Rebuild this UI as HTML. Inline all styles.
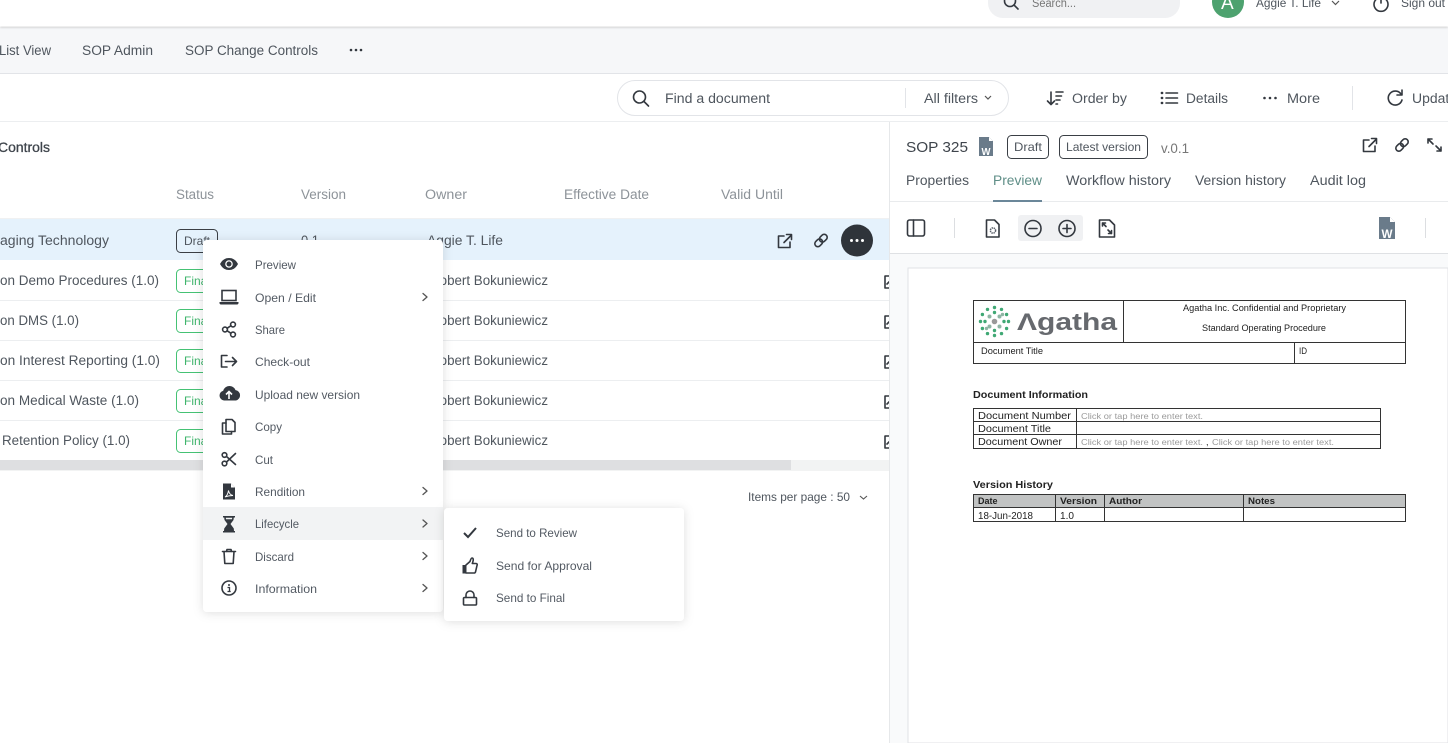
<!DOCTYPE html>
<html lang="en"><head><meta charset="utf-8"><title>SOP Change Controls</title>
<style>
html,body{margin:0;padding:0;background:#fff;width:1448px;height:743px;overflow:hidden}
svg{display:block}
text{font-family:"Liberation Sans",sans-serif;font-size:13.5px;fill:#4f565e}
.m{font-size:12px;fill:#535a63}
.h{fill:#8d9399}
.d{font-size:9px;fill:#222}
.g{font-size:8.5px;fill:#9a9a9a}
.s{fill:none;stroke:#33383f;stroke-width:1.6;stroke-linecap:round;stroke-linejoin:round}
.f{fill:#33383f}
</style></head><body>
<svg width="1448" height="743" viewBox="0 0 1448 743" xmlns="http://www.w3.org/2000/svg">
<defs>
<filter id="sh" x="-15%" y="-15%" width="130%" height="130%"><feDropShadow dx="0" dy="1" stdDeviation="5" flood-color="#000" flood-opacity=".13"/></filter>
<filter id="hd" x="-2%" y="-20%" width="104%" height="160%"><feDropShadow dx="0" dy="1" stdDeviation="1" flood-color="#000" flood-opacity=".18"/></filter>
</defs>
<rect width="1448" height="743" fill="#fff"/>

<!-- sub nav -->
<rect y="27" width="1448" height="46" fill="#f6f7f9"/>
<rect y="73" width="1448" height="1" fill="#e2e4e8"/>
<text x="-1" y="55" textLength="52" lengthAdjust="spacingAndGlyphs">List View</text>
<text x="82" y="55" textLength="71" lengthAdjust="spacingAndGlyphs">SOP Admin</text>
<text x="185" y="55" textLength="133" lengthAdjust="spacingAndGlyphs">SOP Change Controls</text>
<g class="f"><circle cx="351" cy="50" r="1.3"/><circle cx="356" cy="50" r="1.3"/><circle cx="361" cy="50" r="1.3"/></g>

<!-- header -->
<rect width="1448" height="26.500" fill="#fff" filter="url(#hd)"/>
<rect x="988" y="-20" width="192" height="38" rx="15" fill="#f0f1f3"/>
<g class="s"><circle cx="1010" cy="1" r="5.500"/><path d="M1014 5l4 4"/></g>
<text x="1032" y="7" textLength="44" lengthAdjust="spacingAndGlyphs" style="font-size:11.500px;fill:#777">Search...</text>
<circle cx="1228" cy="2" r="16" fill="#4da26f"/>
<text x="1221" y="9" style="font-size:19px;fill:#fff">A</text>
<text x="1256" y="7" textLength="65" lengthAdjust="spacingAndGlyphs" style="font-size:12px">Aggie T. Life</text>
<path d="M1332 1l3.500 3.500 3.500-3.500" fill="none" stroke="#555" stroke-width="1.200"/>
<g class="s"><path d="M1376.500 -1a7 7 0 1 0 9 0"/><path d="M1381 -4v7"/></g>
<text x="1401" y="7" textLength="44" lengthAdjust="spacingAndGlyphs" style="font-size:12px">Sign out</text>

<!-- toolbar -->
<rect y="121" width="1448" height="1" fill="#eceef0"/>
<rect x="617.500" y="80.500" width="391" height="35" rx="17.500" fill="#fff" stroke="#e2e4e8"/>
<g class="s"><circle cx="639.500" cy="97" r="6"/><path d="M644 101.500l4.500 4.500"/></g>
<text x="665" y="103" textLength="105" lengthAdjust="spacingAndGlyphs">Find a document</text>
<rect x="905" y="88" width="1" height="20" fill="#e2e4e8"/>
<text x="924" y="103" textLength="54" lengthAdjust="spacingAndGlyphs">All filters</text>
<path d="M985 96l3 3 3-3" fill="none" stroke="#555" stroke-width="1.200"/>
<g class="s"><path d="M1051 92v12M1047.500 101l3.500 3.500 3.500-3.500"/><path d="M1056 92h7M1056 96h5.500M1056 100h4M1056 104h1.500"/></g>
<text x="1072" y="103" textLength="55" lengthAdjust="spacingAndGlyphs">Order by</text>
<g class="s"><path d="M1166 93h11.500M1166 98h11.500M1166 103h11.500"/><path d="M1161.800 93h.4M1161.800 98h.4M1161.800 103h.4" stroke-width="2.400"/></g>
<text x="1186" y="103" textLength="42" lengthAdjust="spacingAndGlyphs">Details</text>
<g class="f"><circle cx="1264.500" cy="98" r="1.300"/><circle cx="1270" cy="98" r="1.300"/><circle cx="1275.500" cy="98" r="1.300"/></g>
<text x="1287" y="103" textLength="33" lengthAdjust="spacingAndGlyphs">More</text>
<rect x="1352" y="86" width="1" height="24" fill="#e2e4e8"/>
<g class="s"><path d="M1401 94a7 7 0 1 0 1 6"/><path d="M1402 90v5h-5"/></g>
<text x="1412" y="103" textLength="45" lengthAdjust="spacingAndGlyphs">Update</text>

<!-- list -->
<text x="-2" y="152" textLength="52" lengthAdjust="spacingAndGlyphs" style="font-size:13.500px;fill:#3f454c;stroke:#3f454c;stroke-width:.3">Controls</text>
<text class="h" x="176" y="199" textLength="38" lengthAdjust="spacingAndGlyphs">Status</text>
<text class="h" x="301" y="199" textLength="45" lengthAdjust="spacingAndGlyphs">Version</text>
<text class="h" x="425" y="199" textLength="42" lengthAdjust="spacingAndGlyphs">Owner</text>
<text class="h" x="564" y="199" textLength="85" lengthAdjust="spacingAndGlyphs">Effective Date</text>
<text class="h" x="721" y="199" textLength="62" lengthAdjust="spacingAndGlyphs">Valid Until</text>
<rect y="218" width="889" height="1" fill="#f0f1f2"/>
<rect y="219" width="889" height="41" fill="#e5f2fc"/>
<g fill="#eceef0"><rect y="300" width="889" height="1"/><rect y="340" width="889" height="1"/><rect y="380" width="889" height="1"/><rect y="420" width="889" height="1"/></g>
<text x="0" y="245" textLength="109" lengthAdjust="spacingAndGlyphs">aging Technology</text>
<text x="0" y="285" textLength="159" lengthAdjust="spacingAndGlyphs">on Demo Procedures (1.0)</text>
<text x="0" y="325" textLength="79" lengthAdjust="spacingAndGlyphs">on DMS (1.0)</text>
<text x="0" y="365" textLength="160" lengthAdjust="spacingAndGlyphs">on Interest Reporting (1.0)</text>
<text x="0" y="405" textLength="139" lengthAdjust="spacingAndGlyphs">on Medical Waste (1.0)</text>
<text x="2" y="445" textLength="128" lengthAdjust="spacingAndGlyphs">Retention Policy (1.0)</text>

<rect x="176.500" y="229.500" width="41" height="23" rx="4" fill="none" stroke="#3a3f45"/>
<text x="184" y="245" style="font-size:12px">Draft</text>
<g fill="#fff" stroke="#45c274">
<rect x="176.500" y="269.500" width="41" height="23" rx="4"/><rect x="176.500" y="309.500" width="41" height="23" rx="4"/><rect x="176.500" y="349.500" width="41" height="23" rx="4"/><rect x="176.500" y="389.500" width="41" height="23" rx="4"/><rect x="176.500" y="429.500" width="41" height="23" rx="4"/>
</g>
<text x="184" y="285" style="font-size:12px;fill:#3fb56c">Final</text>
<text x="184" y="325" style="font-size:12px;fill:#3fb56c">Final</text>
<text x="184" y="365" style="font-size:12px;fill:#3fb56c">Final</text>
<text x="184" y="405" style="font-size:12px;fill:#3fb56c">Final</text>
<text x="184" y="445" style="font-size:12px;fill:#3fb56c">Final</text>
<text x="301" y="245" textLength="18" lengthAdjust="spacingAndGlyphs">0.1</text>
<text x="427" y="245" textLength="76" lengthAdjust="spacingAndGlyphs">Aggie T. Life</text>
<text x="430" y="285" textLength="118" lengthAdjust="spacingAndGlyphs">Robert Bokuniewicz</text>
<text x="430" y="325" textLength="118" lengthAdjust="spacingAndGlyphs">Robert Bokuniewicz</text>
<text x="430" y="365" textLength="118" lengthAdjust="spacingAndGlyphs">Robert Bokuniewicz</text>
<text x="430" y="405" textLength="118" lengthAdjust="spacingAndGlyphs">Robert Bokuniewicz</text>
<text x="430" y="445" textLength="118" lengthAdjust="spacingAndGlyphs">Robert Bokuniewicz</text>

<!-- row actions -->
<g class="s"><path d="M784 236h-5.500v11.500h11.500v-5.500"/><path d="M784 242.500l7.500-7.500M786.500 234.500h5v5"/></g>
<g class="s" transform="translate(821 240.500) rotate(-45)"><rect x="-7.500" y="-3" width="8.500" height="6" rx="3"/><rect x="-1" y="-3" width="8.500" height="6" rx="3"/></g>
<circle cx="857" cy="240.500" r="16" fill="#2f343a"/>
<g fill="#fff"><circle cx="851.500" cy="240.500" r="1.500"/><circle cx="857" cy="240.500" r="1.500"/><circle cx="862.500" cy="240.500" r="1.500"/></g>
<g class="s" stroke-width="1.500"><path d="M892 276h-7v12h7M892 316h-7v12h7M892 356h-7v12h7M892 396h-7v12h7M892 436h-7v12h7"/><path d="M887 284l3-3M887 324l3-3M887 364l3-3M887 404l3-3M887 444l3-3"/></g>

<rect y="460" width="889" height="11" fill="#f2f3f3"/>
<rect y="460" width="791" height="10" fill="#dedfe1"/>
<text x="748" y="501" textLength="102" lengthAdjust="spacingAndGlyphs" style="font-size:12px">Items per page : 50</text>
<path d="M860 496l3.500 3 3.500-3" fill="none" stroke="#555" stroke-width="1.100"/>

<!-- right panel -->
<rect x="889" y="122" width="559" height="621" fill="#fff"/>
<rect x="889" y="122" width="1" height="621" fill="#e6e8ea"/>
<text x="906" y="152" textLength="62" lengthAdjust="spacingAndGlyphs" style="font-size:15px;fill:#3f454c">SOP 325</text>
<path d="M979 137h10l4 4v15h-14z" fill="#6a7b8a"/><path d="M989 137v4h4z" fill="#fff"/>
<text x="981.500" y="155" textLength="9" lengthAdjust="spacingAndGlyphs" style="font-size:10px;font-weight:bold;fill:#fff">W</text>
<rect x="1007.500" y="135.500" width="41" height="23" rx="4" fill="#fff" stroke="#3a3f45"/>
<text x="1014" y="151" textLength="28" lengthAdjust="spacingAndGlyphs" style="font-size:12px">Draft</text>
<rect x="1059.500" y="135.500" width="88" height="23" rx="4" fill="#fff" stroke="#3a3f45"/>
<text x="1066" y="151" textLength="75" lengthAdjust="spacingAndGlyphs" style="font-size:12px">Latest version</text>
<text x="1161" y="153" textLength="28" lengthAdjust="spacingAndGlyphs" style="fill:#777">v.0.1</text>
<g class="s"><path d="M1369 140h-5.500v11.500h11.500v-5.500"/><path d="M1369 146.500l7.500-7.500M1371.500 138.500h5v5"/></g>
<g class="s" transform="translate(1402 145) rotate(-45)"><rect x="-7.500" y="-3" width="8.500" height="6" rx="3"/><rect x="-1" y="-3" width="8.500" height="6" rx="3"/></g>
<g class="s" stroke-width="1.400"><path d="M1428 139l5 5M1428 143v-4h4M1441 151l-5-5M1441 147v4h-4"/></g>
<text x="906" y="185" textLength="63" lengthAdjust="spacingAndGlyphs">Properties</text>
<text x="993" y="185" textLength="49" lengthAdjust="spacingAndGlyphs" style="font-size:13.500px;fill:#5f8e87">Preview</text>
<text x="1066" y="185" textLength="105" lengthAdjust="spacingAndGlyphs">Workflow history</text>
<text x="1195" y="185" textLength="91" lengthAdjust="spacingAndGlyphs">Version history</text>
<text x="1310" y="185" textLength="56" lengthAdjust="spacingAndGlyphs">Audit log</text>
<rect x="890" y="201" width="558" height="1" fill="#e9ebed"/>
<rect x="993" y="200" width="49" height="2" fill="#6b8799"/>

<g class="s"><rect x="907.500" y="220" width="17" height="16" rx="2"/><path d="M913.500 220v16"/></g>
<rect x="954" y="218" width="1" height="20" fill="#dcdee1"/>
<g class="s" stroke-width="1.400"><path d="M986.500 220h8l4.500 4.500v12.500h-12.500z"/></g>
<circle cx="993" cy="230.500" r="2.600" fill="none" stroke="#5a6069" stroke-width="1.500" stroke-dasharray="1.400 .7"/>
<rect x="1018" y="215" width="65" height="26" rx="3" fill="#f0f1f3"/>
<g class="s"><circle cx="1033" cy="228.500" r="8"/><path d="M1029 228.500h8"/><circle cx="1067" cy="228.500" r="8"/><path d="M1063 228.500h8M1067 224.500v8"/></g>
<g class="s" stroke-width="1.400"><path d="M1099.500 220h10l5 5v12h-15z"/><path d="M1102.500 223l3.500 3.500M1102.500 226v-3h3M1111.500 233.500l-3.500-3.500M1111.500 230.500v3h-3"/></g>
<path d="M1379 217h11l5 5v17h-16z" fill="#6a7b8a"/><path d="M1390 217v5h5z" fill="#fff"/>
<text x="1381.500" y="238" textLength="11" lengthAdjust="spacingAndGlyphs" style="font-size:12px;font-weight:bold;fill:#fff">W</text>
<rect x="1425" y="218" width="1" height="20" fill="#dcdee1"/>

<rect x="890" y="253" width="558" height="490" fill="#f9fafb"/>
<rect x="890" y="253" width="558" height="1" fill="#dfe1e4"/>
<rect x="908" y="268" width="540" height="475" fill="#fff" stroke="#e0e2e5"/>

<!-- document -->
<g fill="none" stroke="#333" stroke-width="1">
<rect x="973.500" y="300.500" width="432" height="63"/>
<path d="M1123.500 300v42M973 342.500h432M1294.500 342v21"/>
<rect x="973.500" y="408.500" width="407" height="40"/>
<path d="M973 421.500h408M973 434.500h408M1076.500 408v40"/>
</g>
<g transform="translate(994.500 321.500)">
<g fill="#3fa874"><circle cx="14" cy="0" r="1.700"/><circle cx="12.100" cy="7" r="1.700"/><circle cx="7" cy="12.100" r="1.700"/><circle cx="0" cy="14" r="1.700"/><circle cx="-7" cy="12.100" r="1.700"/><circle cx="-12.100" cy="7" r="1.700"/><circle cx="-14" cy="0" r="1.700"/><circle cx="-12.100" cy="-7" r="1.700"/><circle cx="-7" cy="-12.100" r="1.700"/><circle cx="0" cy="-14" r="1.700"/><circle cx="7" cy="-12.100" r="1.700"/><circle cx="12.100" cy="-7" r="1.700"/>
<circle cx="9.500" cy="0" r="1.700"/><circle cx="-9.500" cy="0" r="1.700"/><circle cx="0" cy="9" r="1.700"/><circle cx="0" cy="-9" r="1.700"/></g>
<g fill="#8fb5a4"><circle cx="5" cy="5" r="2"/><circle cx="-5" cy="5" r="2"/><circle cx="5" cy="-5" r="2"/><circle cx="-5" cy="-5" r="2"/><circle cx="8" cy="-7" r="1.700"/><circle cx="-8" cy="7" r="1.700"/></g>
<circle r="2.800" fill="#999"/>
</g>
<text x="1017" y="330" textLength="100" lengthAdjust="spacingAndGlyphs" style="font-size:24px;font-weight:bold;fill:#66696e">Λgatha</text>
<text class="d" x="1183" y="311" textLength="163" lengthAdjust="spacingAndGlyphs">Agatha Inc. Confidential and Proprietary</text>
<text class="d" x="1202" y="331" textLength="124" lengthAdjust="spacingAndGlyphs">Standard Operating Procedure</text>
<text class="d" x="981" y="354" textLength="62" lengthAdjust="spacingAndGlyphs">Document Title</text>
<text class="d" x="1299" y="354" textLength="8" lengthAdjust="spacingAndGlyphs">ID</text>
<text x="973" y="398" textLength="115" lengthAdjust="spacingAndGlyphs" style="font-size:10.500px;font-weight:bold;fill:#222">Document Information</text>
<text x="978" y="419" textLength="93" lengthAdjust="spacingAndGlyphs" style="font-size:10.500px;fill:#222">Document Number</text>
<text x="978" y="432" textLength="73" lengthAdjust="spacingAndGlyphs" style="font-size:10.500px;fill:#222">Document Title</text>
<text x="978" y="445" textLength="84" lengthAdjust="spacingAndGlyphs" style="font-size:10.500px;fill:#222">Document Owner</text>
<text class="g" x="1081" y="419" textLength="122" lengthAdjust="spacingAndGlyphs">Click or tap here to enter text.</text>
<text class="g" x="1081" y="445" textLength="122" lengthAdjust="spacingAndGlyphs">Click or tap here to enter text.</text>
<text class="d" x="1206" y="445">,</text>
<text class="g" x="1212" y="445" textLength="122" lengthAdjust="spacingAndGlyphs">Click or tap here to enter text.</text>
<text x="973" y="488" textLength="80" lengthAdjust="spacingAndGlyphs" style="font-size:10.500px;font-weight:bold;fill:#222">Version History</text>
<rect x="973.500" y="494.500" width="432" height="13" fill="#c1c3c3"/>
<g fill="none" stroke="#333"><rect x="973.500" y="494.500" width="432" height="27"/><path d="M973 507.500h432M1055.500 494v28M1104.500 494v28M1243.500 494v28"/></g>
<text x="978" y="504" style="font-size:9px;font-weight:bold;fill:#222">Date</text>
<text x="1060" y="504" textLength="37" lengthAdjust="spacingAndGlyphs" style="font-size:9px;font-weight:bold;fill:#222">Version</text>
<text x="1109" y="504" textLength="33" lengthAdjust="spacingAndGlyphs" style="font-size:9px;font-weight:bold;fill:#222">Author</text>
<text x="1248" y="504" textLength="27" lengthAdjust="spacingAndGlyphs" style="font-size:9px;font-weight:bold;fill:#222">Notes</text>
<text x="978" y="519" textLength="55" lengthAdjust="spacingAndGlyphs" style="font-size:10px;fill:#222">18-Jun-2018</text>
<text x="1060" y="519" textLength="14" lengthAdjust="spacingAndGlyphs" style="font-size:10px;fill:#222">1.0</text>

<!-- context menu -->
<rect x="203" y="240" width="240" height="372" rx="4" fill="#fff" filter="url(#sh)"/>
<rect x="203" y="507" width="240" height="33" fill="#f2f3f4"/>
<text class="m" x="255" y="269" textLength="41" lengthAdjust="spacingAndGlyphs">Preview</text>
<text class="m" x="255" y="302" textLength="61" lengthAdjust="spacingAndGlyphs">Open / Edit</text>
<text class="m" x="255" y="334" textLength="30" lengthAdjust="spacingAndGlyphs">Share</text>
<text class="m" x="255" y="366" textLength="55" lengthAdjust="spacingAndGlyphs">Check-out</text>
<text class="m" x="255" y="399" textLength="105" lengthAdjust="spacingAndGlyphs">Upload new version</text>
<text class="m" x="255" y="431" textLength="27" lengthAdjust="spacingAndGlyphs">Copy</text>
<text class="m" x="255" y="464" textLength="18" lengthAdjust="spacingAndGlyphs">Cut</text>
<text class="m" x="255" y="496" textLength="50" lengthAdjust="spacingAndGlyphs">Rendition</text>
<text class="m" x="255" y="528" textLength="44" lengthAdjust="spacingAndGlyphs">Lifecycle</text>
<text class="m" x="255" y="561" textLength="39" lengthAdjust="spacingAndGlyphs">Discard</text>
<text class="m" x="255" y="593" textLength="62" lengthAdjust="spacingAndGlyphs">Information</text>
<g fill="none" stroke="#555" stroke-width="1.300" stroke-linecap="round" stroke-linejoin="round"><path d="M423 293.500l4 3.500-4 3.500M423 487.500l4 3.500-4 3.500M423 520l4 3.500-4 3.500M423 552.500l4 3.500-4 3.500M423 584.500l4 3.500-4 3.500"/></g>
<!-- eye -->
<path class="f" d="M220 264c2.500-4.500 5.500-6 9-6s6.500 1.500 9 6c-2.500 4.500-5.500 6-9 6s-6.500-1.500-9-6z"/><circle cx="229" cy="264" r="3.800" fill="#fff"/><circle cx="229" cy="264" r="2.500" fill="#33383f"/>
<!-- laptop -->
<rect x="222" y="290.500" width="14" height="10" fill="none" stroke="#33383f" stroke-width="1.600"/><path class="f" d="M219.500 302h19v1.500l-1 1h-17l-1-1z"/>
<!-- share -->
<g class="s" stroke-width="1.400"><circle cx="225" cy="329.500" r="2.400"/><circle cx="233" cy="324.500" r="2.400"/><circle cx="233" cy="334.500" r="2.400"/><path d="M227 328.300l4-2.600M227 330.700l4 2.600"/></g>
<!-- check-out -->
<g class="s"><path d="M227 355.500h-5.500v11.500h5.500"/><path d="M225.500 361.500h11M232.500 357.500l4 4-4 4"/></g>
<!-- cloud upload -->
<path class="f" d="M224 400.500a5 5 0 0 1-.8-9.800 6.500 6.500 0 0 1 12.300-.6 5.300 5.300 0 0 1 .5 10.400z"/><path d="M229 399v-7M226 394.500l3-3 3 3" fill="none" stroke="#fff" stroke-width="1.600"/>
<!-- copy -->
<g class="s" stroke-width="1.400"><path d="M226 423h-3.500v11h9v-2.500"/><path d="M226 419.500h6l3 3v9h-9z"/></g>
<!-- cut -->
<g class="s" stroke-width="1.500"><circle cx="224.500" cy="455" r="2.300"/><circle cx="224.500" cy="463.500" r="2.300"/><path d="M226.500 456.500l9 8M226.500 462l9-8.500"/></g>
<!-- pdf -->
<path class="f" d="M223 483.500h8l4 4v12h-12z"/><path d="M231 483.500v4h4z" fill="#fff"/><path d="M225 497c2-1 3-3.500 3.500-6.500.5 3 2 4.500 4.500 5-2 0-5 .3-8 1.500z" fill="none" stroke="#fff" stroke-width=".9"/>
<!-- hourglass -->
<path class="f" d="M223 516h12v1.500h-1.200l-.3 2.500-3 4 3.300 4.500.2 2.500h1v1.500h-12v-1.500h1l.2-2.500 3.300-4.500-3-4-.3-2.500h-1.200z"/><path d="M225.800 517.800h6.400l-.2 1.500h-6z" fill="#f2f3f4"/>
<!-- trash -->
<g class="s" stroke-width="1.400"><path d="M222.500 551.500h13M224 551.500l.8 12h8.400l.8-12M226.500 551.500l.5-2h4l.5 2"/></g>
<!-- info -->
<circle class="s" cx="229" cy="588" r="7"/><circle cx="229" cy="585" r="1" fill="#33383f"/><path d="M227.500 587.500h2v4M227.500 591.500h3.200" fill="none" stroke="#33383f" stroke-width="1.300"/>

<!-- submenu -->
<rect x="444" y="508" width="240" height="113" rx="4" fill="#fff" filter="url(#sh)"/>
<text class="m" x="496" y="537" textLength="81" lengthAdjust="spacingAndGlyphs">Send to Review</text>
<text class="m" x="496" y="570" textLength="96" lengthAdjust="spacingAndGlyphs">Send for Approval</text>
<text class="m" x="496" y="602" textLength="69" lengthAdjust="spacingAndGlyphs">Send to Final</text>
<path d="M464 533l4 4 8-9" fill="none" stroke="#33383f" stroke-width="2"/>
<path class="f" d="M462.500 565h4v8.500h-4z"/><path class="s" stroke-width="1.400" d="M466 565l4-3.500c.5-1.500 1-3.500 2-3.500 1.500 0 1.500 2 .8 4l-.5 1.500h3.700c1.200 0 1.500 1.200 1 2l-1.500 6.500c-.2.600-.6 1-1.300 1H466"/>
<g class="s"><rect x="463.500" y="597.500" width="13" height="7.500" rx="1"/><path d="M466 597.500v-2.500a4 4 0 0 1 8 0v2.500"/></g>
</svg>
</body></html>
